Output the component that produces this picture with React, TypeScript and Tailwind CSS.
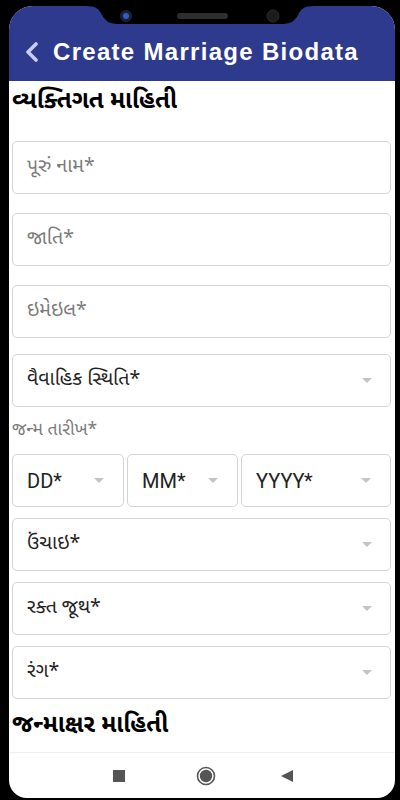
const fieldFont = { fontFamily: '"Noto Sans Gujarati", "Noto Sans", Roboto, sans-serif' };

const Arrow = () => (
  <svg width="10" height="5" viewBox="0 0 10 5" className="shrink-0">
    <path d="M0 0 H10 L5 5 Z" fill="#c4c4c4" />
  </svg>
);

const TextField = ({ placeholder }: { placeholder: string }) => (
  <div className="h-[53px] rounded-[5px] border border-[#d4d4d4] flex items-center pl-[14px]">
    <span className="text-[19.5px] text-[#7a7a7a]" style={fieldFont}>
      {placeholder}
    </span>
  </div>
);

const SelectField = ({ label, className = "" }: { label: string; className?: string }) => (
  <div
    className={`h-[53px] rounded-[5px] border border-[#d4d4d4] flex items-center justify-between pl-[14px] pr-[18px] ${className}`}
  >
    <span className="text-[19.5px] text-[#222]" style={fieldFont}>
      {label}
    </span>
    <Arrow />
  </div>
);

const DateField = ({ label, className = "" }: { label: string; className?: string }) => (
  <div
    className={`h-[53px] rounded-[5px] border border-[#d4d4d4] flex items-center justify-between pl-[14px] pr-[19px] ${className}`}
  >
    <span className="text-[20px] text-[#222] font-['Roboto',sans-serif]">{label}</span>
    <Arrow />
  </div>
);

const Notch = () => (
  <svg width="400" height="30" viewBox="0 0 400 30" className="absolute top-0 left-0">
    <path
      d="M86 0 H314 V6 C304 6 301 9 298 15 C294 22 290 24 280 24 H120 C110 24 106 22 102 15 C99 9 96 6 86 6 Z"
      fill="#000"
    />
    <circle cx="126" cy="16" r="6" fill="#1b2030" />
    <circle cx="126" cy="16" r="3" fill="#2f5bd6" />
    <rect x="177" y="13" width="51" height="6" rx="3" fill="#2e2e2e" />
    <circle cx="273" cy="16" r="6" fill="#1c1c1c" stroke="#2b2b2b" strokeWidth="1" />
  </svg>
);

export default function App() {
  return (
    <div className="relative w-[400px] h-[800px] bg-black overflow-hidden pl-[9px] pr-[5px] pt-[6px] pb-[2px]">
      <div className="flex flex-col h-full bg-white rounded-t-[24px] rounded-b-[18px] overflow-hidden">
        <header className="h-[75px] shrink-0 bg-[#2e3a8d] flex items-center pt-[17px] pl-[16px]">
          <svg width="14" height="20" viewBox="0 0 14 20" className="mr-[14px]">
            <polyline
              points="11,2 3,10 11,18"
              fill="none"
              stroke="#c9cbef"
              strokeWidth="3.6"
              strokeLinecap="round"
              strokeLinejoin="round"
            />
          </svg>
          <h1 className="text-white text-[24px] font-bold font-['Liberation_Sans',Arial,sans-serif] tracking-[1.3px] whitespace-nowrap">
            Create Marriage Biodata
          </h1>
        </header>

        <main className="flex-1 overflow-hidden pl-[3px] pr-[4px]">
          <h2 className="h-[42px] flex items-center text-[24px] font-bold text-black" style={fieldFont}>
            વ્યક્તિગત માહિતી
          </h2>
          <div className="mt-[18px] flex flex-col gap-[19px]">
            <TextField placeholder="પૂરું નામ*" />
            <TextField placeholder="જાતિ*" />
            <TextField placeholder="ઇમેઇલ*" />
          </div>
          <SelectField label="વૈવાહિક સ્થિતિ*" className="mt-[16px]" />
          <div className="mt-[12px] h-[24px] flex items-center text-[17.5px] text-[#7a7a7a]" style={fieldFont}>
            જન્મ તારીખ*
          </div>
          <div className="mt-[11px] flex gap-[3px]">
            <DateField label="DD*" className="w-[112px]" />
            <DateField label="MM*" className="w-[111px]" />
            <DateField label="YYYY*" className="flex-1" />
          </div>
          <div className="mt-[11px] flex flex-col gap-[11px]">
            <SelectField label="ઉંચાઇ*" />
            <SelectField label="રક્ત જૂથ*" />
            <SelectField label="રંગ*" />
          </div>
          <h2 className="h-[53px] flex items-center text-[24px] font-bold text-black" style={fieldFont}>
            જન્માક્ષર માહિતી
          </h2>
        </main>

        <nav className="h-[46px] shrink-0 border-t border-[#eeeeee] flex items-center">
          <div className="ml-[104px] w-[12px] h-[12px] bg-[#555]" />
          <svg width="20" height="20" viewBox="0 0 20 20" className="ml-[71px]">
            <circle cx="10" cy="10" r="8.5" fill="none" stroke="#555" strokeWidth="1.6" />
            <circle cx="10" cy="10" r="6.2" fill="#555" />
          </svg>
          <svg width="12" height="12" viewBox="0 0 12 12" className="ml-[65px]">
            <path d="M12 0 V12 L0 6 Z" fill="#555" />
          </svg>
        </nav>
      </div>
      <Notch />
    </div>
  );
}
